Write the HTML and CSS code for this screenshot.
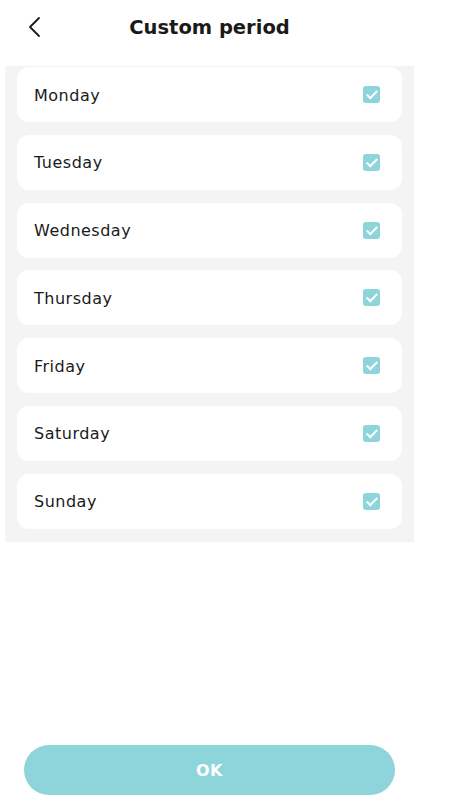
FILE: index.html
```html
<!DOCTYPE html>
<html lang="en">
<head>
    <meta charset="UTF-8">
    <meta name="viewport" content="width=device-width, initial-scale=1.0">
    <title>Custom period</title>
    <link rel="stylesheet" href="styles.css">
</head>
<body>
    <div class="screen">
        <div class="header">
            <button class="back" type="button" aria-label="Back">
                <svg width="14" height="22" viewBox="0 0 14 22">
                    <path d="M11 2 L2 11 L11 20" fill="none" stroke="#1a1a1a" stroke-width="1.8" stroke-linecap="round" stroke-linejoin="round"/>
                </svg>
            </button>
            <h1>Custom period</h1>
        </div>

        <div class="days">
            <label class="day"><span>Monday</span><input type="checkbox" checked><i class="box"></i></label>
            <label class="day"><span>Tuesday</span><input type="checkbox" checked><i class="box"></i></label>
            <label class="day"><span>Wednesday</span><input type="checkbox" checked><i class="box"></i></label>
            <label class="day"><span>Thursday</span><input type="checkbox" checked><i class="box"></i></label>
            <label class="day"><span>Friday</span><input type="checkbox" checked><i class="box"></i></label>
            <label class="day"><span>Saturday</span><input type="checkbox" checked><i class="box"></i></label>
            <label class="day"><span>Sunday</span><input type="checkbox" checked><i class="box"></i></label>
        </div>

        <button class="ok" type="button">OK</button>
    </div>
</body>
</html>
```

FILE: styles.css
```css
body {
    margin: 0;
    background: #ffffff;
    font-family: "DejaVu Sans", "Noto Sans", sans-serif;
    color: #1a1a1a;
}
.screen {
    width: 409px;
    margin-left: 5px;
    height: 808px;
    display: flex;
    flex-direction: column;
}
.header {
    position: relative;
    height: 66px;
    display: flex;
    justify-content: center;
}
.header h1 {
    margin: 15px 0 0;
    font-size: 19.5px;
    font-weight: 700;
    line-height: 26px;
}
.back {
    position: absolute;
    left: 20px;
    top: 16px;
    border: none;
    background: none;
    padding: 0;
    width: 20px;
    height: 24px;
    cursor: pointer;
}
.days {
    background: #f4f4f4;
    padding: 1px 12px 13px;
    display: flex;
    flex-direction: column;
    gap: 12.8px;
}
.day {
    height: 55px;
    background: #ffffff;
    border-radius: 12px;
    display: flex;
    align-items: center;
    justify-content: space-between;
    padding: 1px 22px 0 17px;
    box-sizing: border-box;
    font-size: 16px;
    letter-spacing: 0.5px;
}
.day input {
    display: none;
}
.box {
    width: 17px;
    height: 17px;
    border-radius: 3px;
    background: #8dd4db;
    position: relative;
    margin-top: -1px;
}
.box::after {
    content: "";
    position: absolute;
    left: 6px;
    top: 2px;
    width: 4px;
    height: 9px;
    border: solid #ffffff;
    border-width: 0 2px 2px 0;
    transform: rotate(45deg);
}
.ok {
    margin: auto 19px 13px;
    height: 50px;
    border: none;
    border-radius: 25px;
    background: #8dd4db;
    color: #ffffff;
    font-family: "DejaVu Sans", "Noto Sans", sans-serif;
    font-size: 16px;
    font-weight: 700;
    letter-spacing: 0.5px;
    cursor: pointer;
}
```
